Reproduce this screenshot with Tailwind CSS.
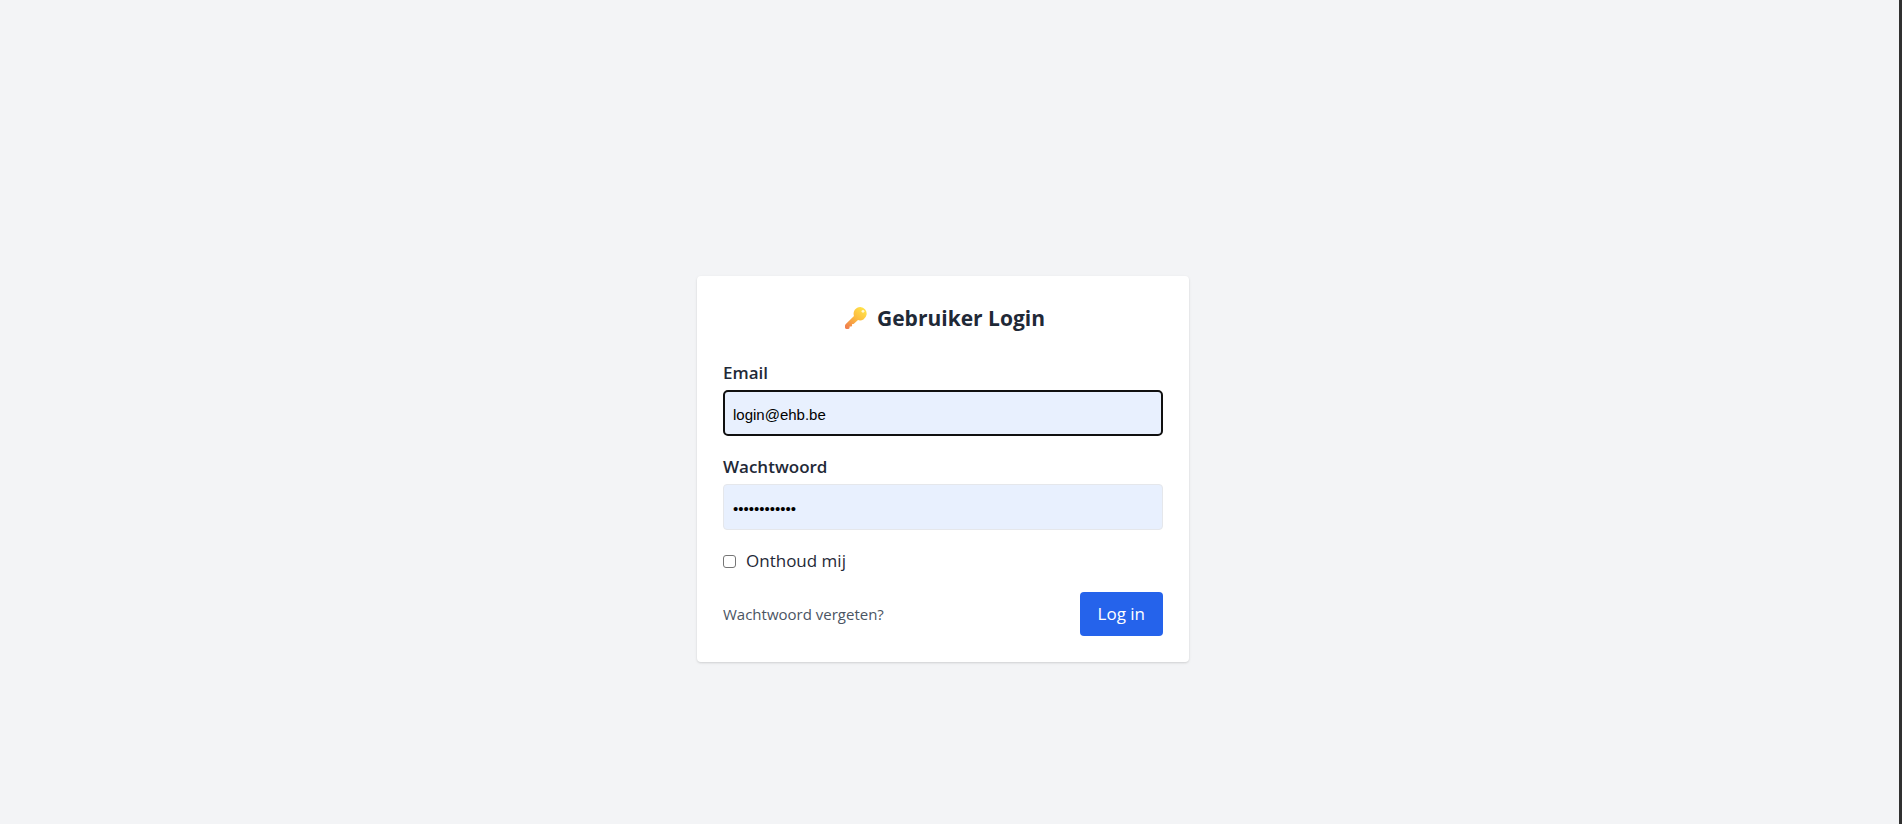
<!DOCTYPE html>
<html lang="nl">
<head>
<meta charset="utf-8">
<meta name="viewport" content="width=device-width, initial-scale=1">
<title>Gebruiker Login</title>
<script src="https://cdn.jsdelivr.net/npm/@tailwindcss/browser@4"></script>
</head>
<body class="flex min-h-screen bg-[#f3f4f6] font-['Segoe_UI','Open_Sans','Noto_Sans',sans-serif] text-[17px] leading-[26px] text-[#1f2937]">
  <main class="flex grow flex-col items-center pt-[276px] pr-[13px]">
    <form class="w-full max-w-[492px] rounded bg-white p-[26px] shadow-[0_1px_3px_rgba(0,0,0,0.1),0_1px_2px_rgba(0,0,0,0.06)]">
      <h1 class="mb-[26px] flex items-center justify-center gap-2 text-[21px] leading-8 font-bold">
        <svg class="h-[22px] w-[28px]" viewBox="-4 0 28 22" aria-hidden="true">
          <defs>
            <linearGradient id="key" x1="0.85" y1="0.1" x2="0.1" y2="0.95">
              <stop offset="0" stop-color="#ffe048"/>
              <stop offset="0.5" stop-color="#fcb83f"/>
              <stop offset="1" stop-color="#f0804e"/>
            </linearGradient>
          </defs>
          <path fill="url(#key)" d="M15.300 0a6.700 6.700 0 0 0-6.300 9L.6 17.300c-.4.4-.6.9-.6 1.400v1.900c0 .8.600 1.400 1.400 1.400h1.900c.8 0 1.300-.6 1.300-1.400v-1h1.200c.8 0 1.300-.5 1.300-1.300v-1.200l1.500-.2 4.400-3.800A6.700 6.700 0 1 0 15.300 0z"/>
          <circle cx="18" cy="4.300" r="1.400" fill="#fff8d6"/>
        </svg>
        Gebruiker Login
      </h1>

      <div class="mb-[18px]">
        <label for="email" class="mb-1 block font-semibold">Email</label>
        <input id="email" type="email" value="login@ehb.be" class="block h-[46px] w-full rounded-[5px] border-2 border-[#101010] bg-[#e8f0fe] px-2 pt-0.5 font-['Liberation_Sans',Arial,sans-serif] text-[15px] text-black outline-none">
      </div>

      <div class="mb-[18px]">
        <label for="password" class="mb-1 block font-semibold">Wachtwoord</label>
        <input id="password" type="password" value="wachtwoord12" class="block h-[46px] w-full rounded border border-[#e5e7eb] bg-[#e8f0fe] px-[9px] pt-0.5 font-['Liberation_Sans',Arial,sans-serif] text-[15px] text-black outline-none">
      </div>

      <div class="mb-[18px] flex items-center gap-2.5">
        <input id="remember" type="checkbox" class="size-[13px] appearance-none rounded-[3px] border border-[#767676] bg-white checked:bg-[#2563eb]">
        <label for="remember">Onthoud mij</label>
      </div>

      <div class="flex items-center justify-between">
        <a href="#" class="text-[15px] text-[#4b5563]">Wachtwoord vergeten?</a>
        <button type="submit" class="rounded bg-[#2563eb] px-[18px] py-[9px] text-white">Log in</button>
      </div>
    </form>
  </main>
  <div class="w-[3px] shrink-0 bg-[#303030]"></div>
</body>
</html>
